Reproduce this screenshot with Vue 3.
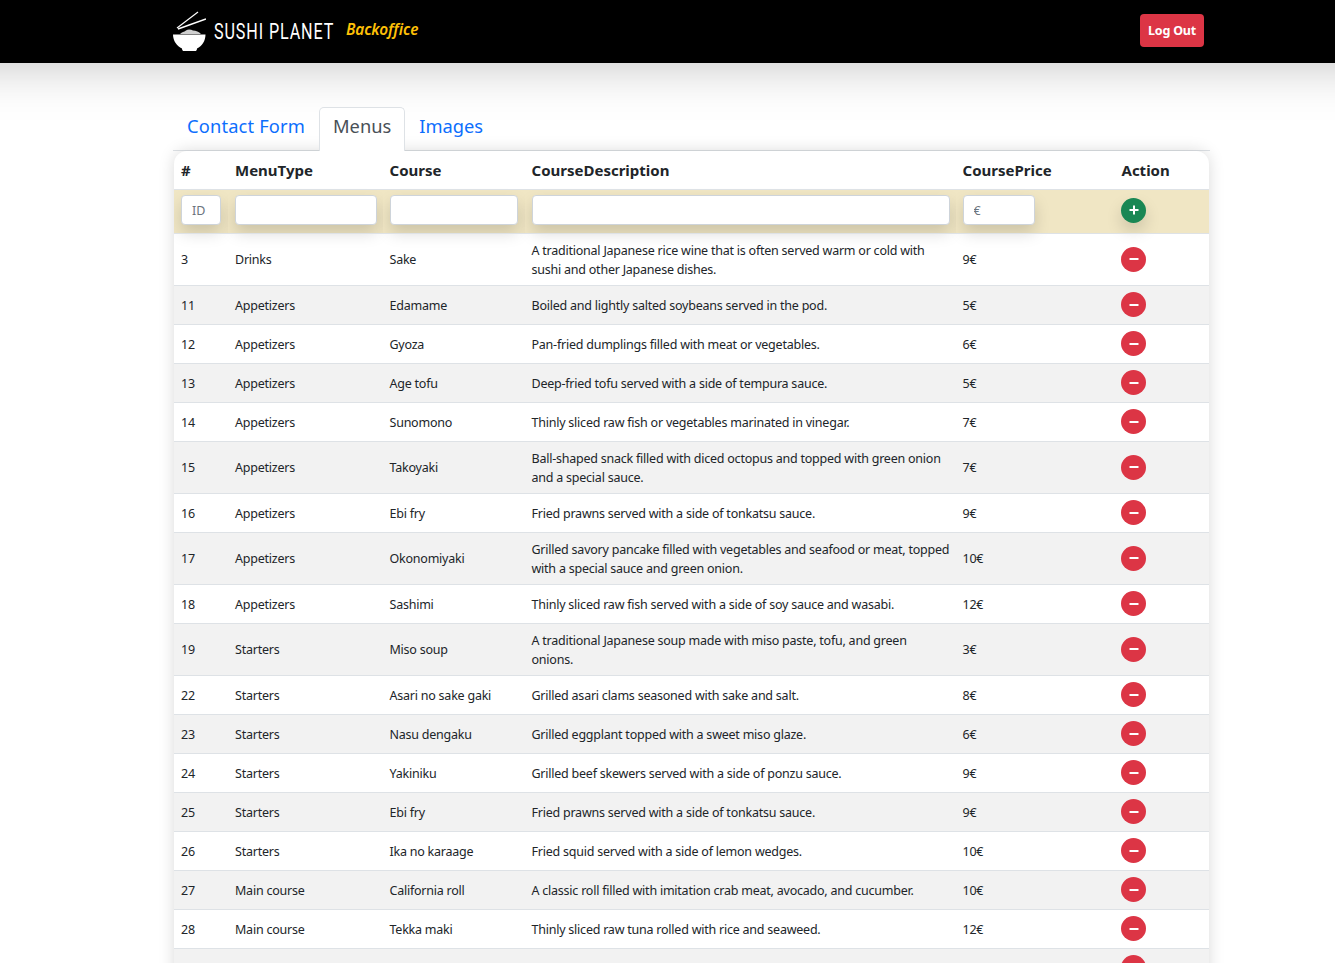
<script setup>
const rows = [
  [3, 'Drinks', 'Sake', 'A traditional Japanese rice wine that is often served warm or cold with sushi and other Japanese dishes.', '9€'],
  [11, 'Appetizers', 'Edamame', 'Boiled and lightly salted soybeans served in the pod.', '5€'],
  [12, 'Appetizers', 'Gyoza', 'Pan-fried dumplings filled with meat or vegetables.', '6€'],
  [13, 'Appetizers', 'Age tofu', 'Deep-fried tofu served with a side of tempura sauce.', '5€'],
  [14, 'Appetizers', 'Sunomono', 'Thinly sliced raw fish or vegetables marinated in vinegar.', '7€'],
  [15, 'Appetizers', 'Takoyaki', 'Ball-shaped snack filled with diced octopus and topped with green onion and a special sauce.', '7€'],
  [16, 'Appetizers', 'Ebi fry', 'Fried prawns served with a side of tonkatsu sauce.', '9€'],
  [17, 'Appetizers', 'Okonomiyaki', 'Grilled savory pancake filled with vegetables and seafood or meat, topped with a special sauce and green onion.', '10€'],
  [18, 'Appetizers', 'Sashimi', 'Thinly sliced raw fish served with a side of soy sauce and wasabi.', '12€'],
  [19, 'Starters', 'Miso soup', 'A traditional Japanese soup made with miso paste, tofu, and green onions.', '3€'],
  [22, 'Starters', 'Asari no sake gaki', 'Grilled asari clams seasoned with sake and salt.', '8€'],
  [23, 'Starters', 'Nasu dengaku', 'Grilled eggplant topped with a sweet miso glaze.', '6€'],
  [24, 'Starters', 'Yakiniku', 'Grilled beef skewers served with a side of ponzu sauce.', '9€'],
  [25, 'Starters', 'Ebi fry', 'Fried prawns served with a side of tonkatsu sauce.', '9€'],
  [26, 'Starters', 'Ika no karaage', 'Fried squid served with a side of lemon wedges.', '10€'],
  [27, 'Main course', 'California roll', 'A classic roll filled with imitation crab meat, avocado, and cucumber.', '10€'],
  [28, 'Main course', 'Tekka maki', 'Thinly sliced raw tuna rolled with rice and seaweed.', '12€'],
  ['', '', '', '', '']
]
</script>

<template>
  <div class="page">
    <header class="topbar">
      <div class="brand">
        <svg class="logo" viewBox="0 0 33 41" width="33" height="41" aria-hidden="true">
          <path d="M4 17 L25 1" stroke="#fff" stroke-width="1.2" fill="none" />
          <path d="M5 18 L33 8" stroke="#fff" stroke-width="1.5" fill="none" />
          <path d="M7 23 C9 21 11 21 13 19.5 C15 18 18 18.5 20 19.5 C23 19.5 26 21 28 23 Z" fill="#cfcfcf" />
          <path d="M0 23.5 H32.5 C32.5 30 29 35 24 37.5 C24 39.5 23 40 22 40 H11 C10 40 9 39.5 9 37.5 C4 35 0 30 0 23.5 Z" fill="#fff" />
        </svg>
        <span class="brand-name">SUSHI PLANET</span>
        <span class="brand-sub">Backoffice</span>
      </div>
      <button class="logout">Log Out</button>
    </header>

    <main class="content">
      <nav class="tabs">
        <a class="tab">Contact Form</a>
        <a class="tab active">Menus</a>
        <a class="tab">Images</a>
      </nav>
      <div class="table-card">
        <table>
          <colgroup>
            <col style="width:54px" />
            <col style="width:154.5px" />
            <col style="width:142px" />
            <col style="width:431px" />
            <col style="width:159px" />
            <col />
          </colgroup>
          <thead>
            <tr>
              <th>#</th><th>MenuType</th><th>Course</th><th>CourseDescription</th><th>CoursePrice</th><th>Action</th>
            </tr>
          </thead>
          <tbody>
            <tr class="filter">
              <td><input placeholder="ID" /></td>
              <td class="wide"><input /></td>
              <td><input /></td>
              <td class="wide"><input /></td>
              <td><input class="price" placeholder="€" /></td>
              <td class="act-add">
                <button class="round add" aria-label="Add">
                  <svg viewBox="0 0 16 16" width="16" height="16"><path d="M8 3.5v9M3.5 8h9" stroke="#fff" stroke-width="2" /></svg>
                </button>
              </td>
            </tr>
            <tr v-for="(r, i) in rows" :key="i" :class="{ odd: i % 2 === 1 }">
              <td>{{ r[0] }}</td>
              <td>{{ r[1] }}</td>
              <td>{{ r[2] }}</td>
              <td class="desc">{{ r[3] }}</td>
              <td>{{ r[4] }}</td>
              <td class="act">
                <button class="round del" aria-label="Delete">
                  <svg viewBox="0 0 16 16" width="16" height="16"><path d="M3.5 8h9" stroke="#fff" stroke-width="2" /></svg>
                </button>
              </td>
            </tr>
          </tbody>
        </table>
      </div>
    </main>
  </div>
</template>

<style>
html, body { margin: 0; background: #fff; }
</style>

<style scoped>
.page {
  height: 963px;
  overflow: hidden;
  font-family: "Noto Sans", "Open Sans", sans-serif;
  color: #212529;
  font-size: 12.5px;
  letter-spacing: -0.23px;
  line-height: 19.5px;
  background: #fff;
}
.topbar {
  height: 63px;
  background: #000;
  display: flex;
  align-items: center;
  justify-content: space-between;
  padding: 0 131px 0 173px;
  box-shadow: 0 -60px 50px 60px rgba(0, 0, 0, 0.25);
  position: relative;
}
.brand { display: flex; align-items: center; }
.logo { display: block; }
.brand-name {
  font-family: "Roboto", sans-serif;
  font-weight: 400;
  color: #fff;
  font-size: 21.5px;
  letter-spacing: 1.2px;
  margin-left: 8px;
  transform: scaleX(0.75);
  transform-origin: left center;
  width: 125px;
  white-space: nowrap;
}
.brand-sub {
  font-weight: 600;
  font-style: italic;
  color: #ffc107;
  font-size: 15.4px;
  letter-spacing: -0.1px;
  margin-left: 7px;
  margin-top: -4px;
}
.logout {
  width: 64px;
  height: 33px;
  background: #dc3545;
  color: #fff;
  border: 0;
  border-radius: 4px;
  font: 700 12.5px "Noto Sans", sans-serif;
  letter-spacing: -0.2px;
  padding: 0;
  margin-bottom: 2px;
}
.content { padding: 44px 125px 0 173px; }
.tabs {
  display: flex;
  height: 43px;
  border-bottom: 1px solid #dee2e6;
}
.tab {
  font-size: 18.3px;
  letter-spacing: 0;
  line-height: 29px;
  padding: 3px 13px 7px;
  color: #0d6efd;
  border: 1px solid transparent;
  border-bottom: 0;
  border-radius: 5px 5px 0 0;
  height: 43px;
  box-sizing: border-box;
  position: relative;
}
.tab:first-child { letter-spacing: 0.16px; }
.tab.active {
  color: #495057;
  border-color: #dee2e6;
  background: #fff;
  height: 44px;
}
.table-card {
  width: 1035px;
  margin-left: 1px;
  border-radius: 13px 13px 0 0;
  box-shadow: 0 0 16px rgba(0, 0, 0, 0.15);
  background: #fff;
  overflow: hidden;
}
table {
  width: 1035px;
  table-layout: fixed;
  border-collapse: collapse;
}
th {
  text-align: left;
  font-size: 15px;
  letter-spacing: 0;
  font-weight: 700;
  height: 38px;
  padding: 1px 7px 0;
  box-sizing: border-box;
  border-bottom: 1px solid #dee2e6;
}
td {
  height: 39px;
  box-sizing: border-box;
  padding: 7px 7px 5px;
  border-bottom: 1px solid #dee2e6;
  vertical-align: middle;
}
td.desc { padding-right: 5px; }
td.act { padding: 6px 7px 5px 6.5px; }
tr.odd td { background: #f2f2f2; }
.filter td { background: #f0e6c4; padding: 5px 7px 8px; height: 44px; }
.filter td.wide { padding-right: 5.5px; }
.filter td.act-add { padding-left: 6.5px; }
input {
  display: block;
  width: 100%;
  height: 30px;
  box-sizing: border-box;
  border: 1px solid #ced4da;
  border-radius: 4px;
  padding: 2px 10px 0;
  background: #fff;
  font: 12.5px "Noto Sans", sans-serif;
  color: #212529;
  box-shadow: 0 8px 16px rgba(0, 0, 0, 0.15);
}
input::placeholder { color: #6c757d; }
input.price { width: 72.5px; }
.round {
  width: 25px;
  height: 25px;
  padding: 0;
  border: 0;
  border-radius: 50%;
  display: flex;
  align-items: center;
  justify-content: center;
  margin: 0 0 1px;
}
.add { background: #198754; box-shadow: 0 8px 16px rgba(0, 0, 0, 0.15); margin: 1px 0 0; }
.del { background: #dc3545; }
</style>
